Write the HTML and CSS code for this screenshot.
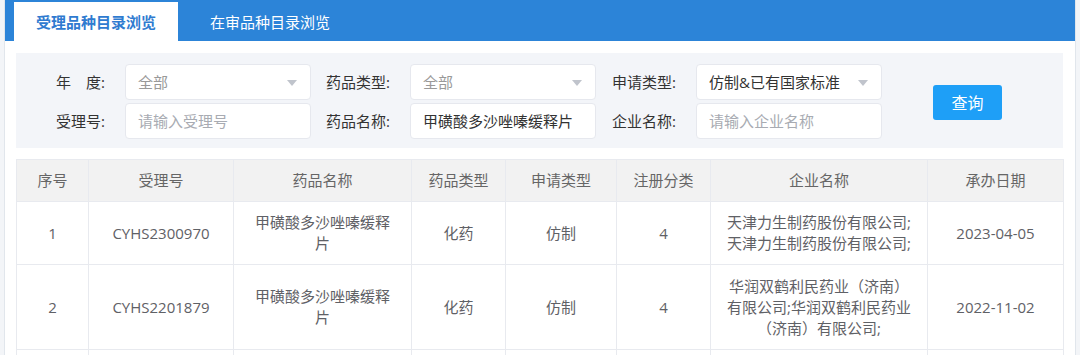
FILE: index.html
```html
<!DOCTYPE html>
<html lang="zh-CN">
<head>
<meta charset="utf-8">
<title>受理品种目录浏览</title>
<link rel="stylesheet" href="styles.css">
</head>
<body>
<div class="page">
  <div class="card">
    <div class="tabs">
      <div class="tab active">受理品种目录浏览</div>
      <div class="tab">在审品种目录浏览</div>
    </div>
    <div class="body">
      <div class="filter">
        <div class="fields">
          <label class="lbl">年&emsp;度:</label>
          <div class="input select muted">全部<span class="arrow"></span></div>
          <label class="lbl">药品类型:</label>
          <div class="input select muted">全部<span class="arrow"></span></div>
          <label class="lbl">申请类型:</label>
          <div class="input select">仿制&amp;已有国家标准<span class="arrow"></span></div>

          <label class="lbl">受理号:</label>
          <div class="input placeholder">请输入受理号</div>
          <label class="lbl">药品名称:</label>
          <div class="input">甲磺酸多沙唑嗪缓释片</div>
          <label class="lbl">企业名称:</label>
          <div class="input placeholder">请输入企业名称</div>
        </div>
        <button class="btn">查询</button>
      </div>

      <table class="grid">
        <colgroup>
          <col style="width:72px"><col style="width:145px"><col style="width:178px"><col style="width:94px">
          <col style="width:111px"><col style="width:94px"><col style="width:217px"><col style="width:136px">
        </colgroup>
        <thead>
          <tr><th>序号</th><th>受理号</th><th>药品名称</th><th>药品类型</th><th>申请类型</th><th>注册分类</th><th>企业名称</th><th>承办日期</th></tr>
        </thead>
        <tbody>
          <tr><td>1</td><td>CYHS2300970</td><td>甲磺酸多沙唑嗪缓释片</td><td>化药</td><td>仿制</td><td>4</td><td>天津力生制药股份有限公司;天津力生制药股份有限公司;</td><td>2023-04-05</td></tr>
          <tr class="tall"><td>2</td><td>CYHS2201879</td><td>甲磺酸多沙唑嗪缓释片</td><td>化药</td><td>仿制</td><td>4</td><td>华润双鹤利民药业（济南）有限公司;华润双鹤利民药业（济南）有限公司;</td><td>2022-11-02</td></tr>
          <tr class="empty"><td></td><td></td><td></td><td></td><td></td><td></td><td></td><td></td></tr>
        </tbody>
      </table>
    </div>
  </div>
</div>
</body>
</html>
```
FILE: styles.css
```css
html, body {
  margin: 0;
  padding: 0;
}
body {
  background: #f3f5f8;
  font-family: "Open Sans", "Noto Sans CJK SC", sans-serif;
  font-size: 15px;
  color: #333;
  overflow: hidden;
}
.page {
  padding-left: 4px;
  padding-right: 4px;
}
.card {
  background: #fff;
  border-left: 1px solid #e1e6ec;
  border-right: 1px solid #e1e6ec;
  min-height: 355px;
}
.tabs {
  display: flex;
  height: 41px;
  background: #2c84d8;
  align-items: flex-end;
}
.tab {
  color: #fff;
  font-size: 15px;
  height: 39px;
  line-height: 40px;
  padding: 0 22px;
  margin-left: 10px;
}
.tab.active {
  margin-left: 9px;
  background: #fff;
  color: #2f7bd0;
  font-weight: bold;
}
.body {
  padding: 12px 12px 0 11px;
}
.filter {
  background: #f3f5f9;
  display: flex;
  align-items: center;
  padding: 11px 0 9px 0;
  height: 75px;
}
.fields {
  display: grid;
  grid-template-columns: 109px 186px 99px 186px 100px 186px;
  row-gap: 3px;
}
.lbl {
  text-align: right;
  padding-right: 20px;
  line-height: 36px;
  color: #333;
  white-space: nowrap;
}
.input {
  position: relative;
  box-sizing: border-box;
  height: 36px;
  line-height: 34px;
  background: #fff;
  border: 1px solid #e6e8ee;
  border-radius: 4px;
  padding: 0 12px;
  color: #333;
  white-space: nowrap;
  overflow: hidden;
}
.muted {
  color: #999;
}
.placeholder {
  color: #a8abb2;
}
.arrow {
  position: absolute;
  right: 13px;
  top: 15px;
  width: 0;
  height: 0;
  border-left: 5.5px solid transparent;
  border-right: 5.5px solid transparent;
  border-top: 6px solid #c0c4cc;
}
.btn {
  margin-left: 51px;
  width: 69px;
  height: 35px;
  background: #1e9ff7;
  color: #fff;
  border: none;
  border-radius: 3px;
  font-family: inherit;
  font-size: 16px;
  padding: 0;
  margin-top: 1px;
}
.grid {
  margin-top: 11px;
  width: 1047px;
  table-layout: fixed;
  border-collapse: collapse;
  color: #5f6166;
}
.grid th, .grid td {
  border: 1px solid #e8eaef;
  text-align: center;
  vertical-align: middle;
  padding: 0 15px;
  font-weight: normal;
  line-height: 21px;
}
.grid th {
  background: #f2f2f2;
  height: 41px;
  color: #666;
}
.grid td {
  height: 62px;
}
.grid tr.tall td {
  height: 84px;
}
```
